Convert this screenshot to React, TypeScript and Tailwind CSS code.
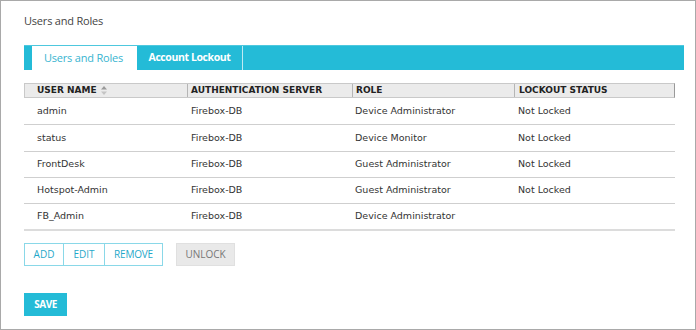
import React from 'react';

const users = [
  { name: 'admin', server: 'Firebox-DB', role: 'Device Administrator', status: 'Not Locked', h: 'h-[27px]' },
  { name: 'status', server: 'Firebox-DB', role: 'Device Monitor', status: 'Not Locked', h: 'h-[27px]' },
  { name: 'FrontDesk', server: 'Firebox-DB', role: 'Guest Administrator', status: 'Not Locked', h: 'h-[26px]' },
  { name: 'Hotspot-Admin', server: 'Firebox-DB', role: 'Guest Administrator', status: 'Not Locked', h: 'h-[26px]' },
  { name: 'FB_Admin', server: 'Firebox-DB', role: 'Device Administrator', status: '', h: 'h-[27px]' },
];

function SortIcon() {
  return (
    <svg width="6" height="9" viewBox="0 0 6 9" className="ml-[4px] mt-[-1px]">
      <path d="M3 0 L6 3.5 L0 3.5 Z" fill="#9a9a9a" />
      <path d="M3 9 L6 5.5 L0 5.5 Z" fill="#c4c4c4" />
    </svg>
  );
}

export default function App() {
  return (
    <div className="w-[696px] h-[330px] bg-white border border-[#a9a9a9] px-[23px] pt-[12px] font-['Open_Sans',sans-serif] text-[#333]">
      <h1 className="text-[11px] leading-[16px] text-[#444] tracking-[-0.2px]">Users and Roles</h1>

      {/* tabs */}
      <div className="mt-[16px] w-[660px] h-[25px] bg-[#24bbd7] flex pl-[8px] border-t border-[#4ec8de]">
        <div className="w-[105px] h-[24px] bg-white flex items-center justify-center text-[11px] text-[#38b4d0] tracking-[-0.2px] pr-[2px]">
          Users and Roles
        </div>
        <div className="w-[106px] h-[24px] flex items-center justify-center text-[10.5px] font-bold text-white border-r border-[#bfeaf3] tracking-[-0.4px]">
          Account Lockout
        </div>
      </div>

      {/* table */}
      <div className="mt-[13px] w-[651px] font-['DejaVu_Sans',sans-serif]">
        <div className="flex h-[15px] bg-[#ebebeb] border border-[#c9c9c9] border-r-[#999] text-[9px] font-bold text-[#222] leading-[13px]">
          <div className="w-[163px] pl-[12px] flex items-center border-r border-[#b5b5b5]">
            USER NAME
            <SortIcon />
          </div>
          <div className="w-[165px] pl-[3px] flex items-center border-r border-[#b5b5b5]">AUTHENTICATION SERVER</div>
          <div className="w-[162px] pl-[3px] flex items-center border-r border-[#b5b5b5]">ROLE</div>
          <div className="flex-1 pl-[4px] flex items-center">LOCKOUT STATUS</div>
        </div>
        {users.map((u, i) => (
          <div
            key={u.name}
            className={`flex items-center ${u.h} text-[9.5px] text-[#333] ${
              i === users.length - 1 ? 'border-b-2 border-[#dcdcdc]' : 'border-b border-[#cfcfcf]'
            }`}
          >
            <div className="w-[163px] pl-[13px]">{u.name}</div>
            <div className="w-[165px] pl-[4px]">{u.server}</div>
            <div className="w-[162px] pl-[3px]">{u.role}</div>
            <div className="flex-1 pl-[4px]">{u.status}</div>
          </div>
        ))}
      </div>

      {/* actions */}
      <div className="mt-[12px] flex items-center">
        <div className="flex h-[23px] border border-[#8ad8e8] text-[10px] text-[#1fa8c9]">
          <button className="w-[39px] flex items-center justify-center border-r border-[#8ad8e8]">ADD</button>
          <button className="w-[41px] flex items-center justify-center border-r border-[#8ad8e8]">EDIT</button>
          <button className="w-[57px] flex items-center justify-center tracking-[-0.2px]">REMOVE</button>
        </div>
        <button className="ml-[13px] w-[59px] h-[23px] bg-[#e9e9e9] border border-[#e0e0e0] text-[10px] text-[#777] flex items-center justify-center">
          UNLOCK
        </button>
      </div>

      <button className="mt-[27px] w-[43px] h-[23px] bg-[#24bbd7] text-white text-[10px] font-bold tracking-[-0.5px] flex items-center justify-center">
        SAVE
      </button>
    </div>
  );
}
